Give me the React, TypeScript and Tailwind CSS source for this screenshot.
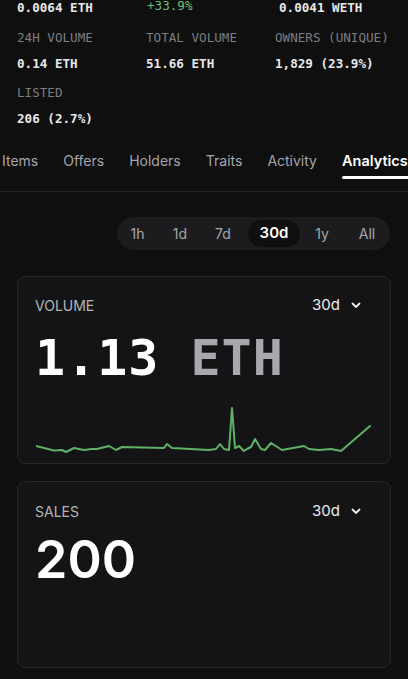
import React from 'react';

const mono = "font-['DejaVu_Sans_Mono','Liberation_Mono',monospace]";
const sans = "font-['Inter','Noto_Sans',sans-serif]";

const stats = [
    [
        { label: '24H VOLUME', value: '0.14 ETH' },
        { label: 'TOTAL VOLUME', value: '51.66 ETH' },
        { label: 'OWNERS (UNIQUE)', value: '1,829 (23.9%)' },
    ],
    [{ label: 'LISTED', value: '206 (2.7%)' }],
];

const tabs = ['Items', 'Offers', 'Holders', 'Traits', 'Activity', 'Analytics'];

const ranges = [
    { label: '1h', w: 'w-[41px]' },
    { label: '1d', w: 'w-[44px]' },
    { label: '7d', w: 'w-[42px] mr-[4px]' },
    { label: '30d', w: 'w-[52px]' },
    { label: '1y', w: 'w-[44px]' },
    { label: 'All', w: 'w-[46px]' },
];

// volume line, page coords (origin moved to the chart box below)
const points: [number, number][] = [
    [37, 444], [55, 448.5], [63, 448], [67, 450], [75, 446], [85, 448], [93, 447], [98, 447],
    [110, 444], [117, 448], [123, 445], [165, 446], [168, 442], [173, 446], [210, 448],
    [217, 447], [221, 442], [225, 447], [230, 448], [233, 406], [236, 446], [240, 444],
    [245, 449], [248, 447], [252, 445], [256, 437], [262, 447], [266, 448], [272, 441],
    [283, 448], [305, 444], [310, 447], [320, 448], [332, 447], [342, 449], [371, 424],
];

const ChevronDown = () => (
    <svg width="12" height="12" viewBox="0 0 12 12" fill="none" stroke="currentColor" strokeWidth="1.8" strokeLinecap="round" strokeLinejoin="round">
        <path d="M2.5 4.5 L6 8 L9.5 4.5" />
    </svg>
);

const CardHeader: React.FC<{ title: string }> = ({ title }) => (
    <div className="flex items-center justify-between pr-[11px]">
        <span className={`${sans} text-[14px] text-[#b4b4b8]`}>{title}</span>
        <span className={`${sans} flex items-center gap-[10px] text-[15px] text-[#ececee]`}>
            30d
            <ChevronDown />
        </span>
    </div>
);

const App: React.FC = () => {
    const d = points.map((p, i) => `${i === 0 ? 'M' : 'L'}${p[0] - 37} ${p[1] - 400}`).join(' ');

    return (
        <div className="w-[408px] h-[679px] overflow-hidden bg-[#0f0f10] text-white">
            <div className={`${mono} px-[17px] text-[12.6px] whitespace-nowrap`}>
                <div className="grid grid-cols-[130px_131px_1fr] h-[17px] items-center -mt-[1px]">
                    <span className="font-bold text-[#e8e8ea]">0.0064 ETH</span>
                    <span className="text-[#6fbf73] -mt-[4px]">+33.9%</span>
                    <span className="font-bold text-[#e8e8ea] pl-[1px]">0.0041 WETH</span>
                </div>
                {stats.map((row, i) => (
                    <div key={i} className={`grid grid-cols-[129px_129px_1fr] ${i === 0 ? 'mt-[13px]' : 'mt-[11px]'}`}>
                        {row.map(s => (
                            <div key={s.label} className="flex flex-col gap-[8px]">
                                <span className="text-[#7d7d82] leading-[18px]">{s.label}</span>
                                <span className="font-bold text-[#e8e8ea] leading-[18px]">{s.value}</span>
                            </div>
                        ))}
                    </div>
                ))}
            </div>

            <div className={`${sans} mt-[7px] border-b border-[#222225]`}>
                <div className="flex gap-[25px] pl-[2px] whitespace-nowrap h-[56px] text-[14px]">
                    {tabs.map(t => (
                        <div key={t} className="relative h-full pt-[15px]">
                            <span className={`leading-[20px] ${t === 'Analytics' ? 'font-semibold text-white text-[14.5px]' : 'text-[#a6a6ab]'}`}>{t}</span>
                            {t === 'Analytics' && <div className="absolute left-0 right-[-20px] top-[41px] h-[3px] bg-white rounded-full" />}
                        </div>
                    ))}
                </div>
            </div>

            <div className="flex justify-end pr-[18px] mt-[25px]">
                <div className={`${sans} flex items-center h-[33px] rounded-full bg-[#1c1c1f] text-[14px]`}>
                    {ranges.map(r => (
                        <span
                            key={r.label}
                            className={r.label === '30d'
                                ? `${r.w} h-[27px] flex items-center justify-center rounded-full bg-[#0f0f10] font-semibold text-white text-[15px]`
                                : `${r.w} flex justify-center text-[#a6a6ab]`}
                        >
                            {r.label}
                        </span>
                    ))}
                </div>
            </div>

            <div className="px-[17px] mt-[26px] flex flex-col gap-[17px]">
                <div className="h-[188px] rounded-[8px] border border-[#27272a] bg-[#141416] px-[17px] pt-[17px]">
                    <CardHeader title="VOLUME" />
                    <div className={`${mono} mt-[12px] text-[50px] leading-[58px] font-bold tracking-[1px]`}>
                        <span className="text-white">1.13 </span>
                        <span className="text-[#a8a8ac]">ETH</span>
                    </div>
                    <svg width="340" height="56" viewBox="0 0 340 56" className="mt-[15px] ml-[1px]" fill="none">
                        <path d={d} stroke="#5fb165" strokeWidth="2" strokeLinejoin="round" strokeLinecap="round" />
                    </svg>
                </div>

                <div className="h-[187px] rounded-[8px] border border-[#27272a] bg-[#141416] px-[17px] pt-[18px]">
                    <CardHeader title="SALES" />
                    <div className={`${sans} mt-[8px] text-[52px] leading-[58px] font-semibold`}>200</div>
                </div>
            </div>
        </div>
    );
};

export default App;
